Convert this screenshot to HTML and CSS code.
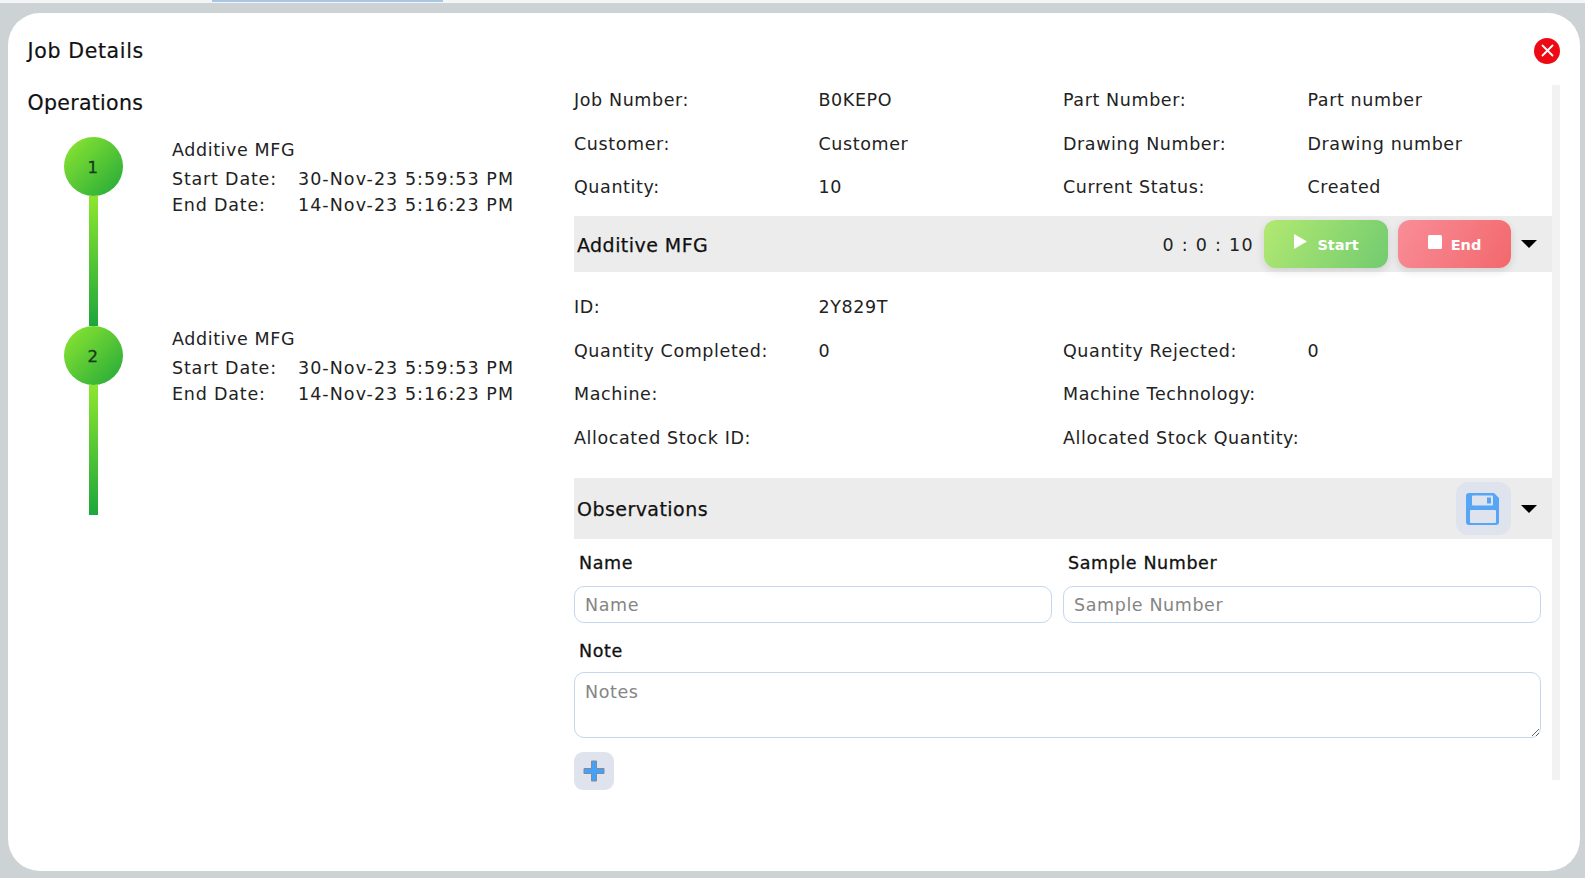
FILE: index.html
```html
<!DOCTYPE html>
<html lang="en">
<head>
  <meta charset="UTF-8" />
  <title>Job Details</title>
  <link rel="stylesheet" href="styles.css">
</head>
<body>
  <div class="top-strip"><span class="top-tab"></span></div>
  <div class="panel">
    <div class="panel-head">
      <h1>Job Details</h1>
      <button class="close-btn">
        <svg width="13" height="13" viewBox="0 0 13 13"><path d="M1.5 1.5l10 10M11.5 1.5l-10 10" stroke="#fff" stroke-width="1.8" stroke-linecap="round"/></svg>
      </button>
    </div>
    <div class="panel-body">
      <div class="ops">
        <h2>Operations</h2>
        <div class="step">
          <div class="step-mark"><div class="circle">1</div><div class="line"></div></div>
          <div class="step-text">
            <div class="step-title">Additive MFG</div>
            <div class="date-row"><span class="date-label">Start Date:</span><span class="date-value">30-Nov-23 5:59:53 PM</span></div>
            <div class="date-row"><span class="date-label">End Date:</span><span class="date-value">14-Nov-23 5:16:23 PM</span></div>
          </div>
        </div>
        <div class="step">
          <div class="step-mark"><div class="circle">2</div><div class="line"></div></div>
          <div class="step-text">
            <div class="step-title">Additive MFG</div>
            <div class="date-row"><span class="date-label">Start Date:</span><span class="date-value">30-Nov-23 5:59:53 PM</span></div>
            <div class="date-row"><span class="date-label">End Date:</span><span class="date-value">14-Nov-23 5:16:23 PM</span></div>
          </div>
        </div>
      </div>

      <div class="details">
        <div class="info-grid">
          <span>Job Number:</span><span>B0KEPO</span><span>Part Number:</span><span>Part number</span>
          <span>Customer:</span><span>Customer</span><span>Drawing Number:</span><span>Drawing number</span>
          <span>Quantity:</span><span>10</span><span>Current Status:</span><span>Created</span>
        </div>

        <div class="section-bar op-bar">
          <span class="section-title">Additive MFG</span>
          <span class="timer">0 : 0 : 10</span>
          <button class="act-btn start-btn">
            <svg width="15" height="17" viewBox="0 0 15 17"><path d="M1 1l13 7.500-13 7.500z" fill="#fff"/></svg>Start
          </button>
          <button class="act-btn end-btn">
            <svg width="14" height="14" viewBox="0 0 14 14"><rect width="14" height="14" rx="1.5" fill="#fff"/></svg>End
          </button>
          <span class="caret"></span>
        </div>

        <div class="info-grid op-grid">
          <span>ID:</span><span>2Y829T</span><span></span><span></span>
          <span>Quantity Completed:</span><span>0</span><span>Quantity Rejected:</span><span>0</span>
          <span>Machine:</span><span></span><span>Machine Technology:</span><span></span>
          <span>Allocated Stock ID:</span><span></span><span>Allocated Stock Quantity:</span><span></span>
        </div>

        <div class="section-bar obs-bar">
          <span class="section-title">Observations</span>
          <button class="save-btn">
            <svg width="34" height="34" viewBox="0 0 34 34">
              <path d="M3 1h25l5 5v24a3 3 0 0 1-3 3H3a3 3 0 0 1-3-3V4a3 3 0 0 1 3-3z" fill="#57a6f5"/>
              <rect x="6" y="3.500" width="21" height="10" rx="1" fill="#dfe3ee"/>
              <rect x="21" y="5.500" width="4" height="6" fill="#57a6f5"/>
              <rect x="4" y="18" width="26" height="13" rx="1" fill="#dfe3ee"/>
            </svg>
          </button>
          <span class="caret"></span>
        </div>

        <div class="form-row">
          <div class="field">
            <label>Name</label>
            <input type="text" placeholder="Name">
          </div>
          <div class="field">
            <label>Sample Number</label>
            <input type="text" placeholder="Sample Number">
          </div>
        </div>
        <div class="field note-field">
          <label>Note</label>
          <textarea placeholder="Notes"></textarea>
        </div>
        <button class="add-btn">
          <svg width="22" height="22" viewBox="0 0 22 22"><path d="M8.500 1h5v7.500H21v5h-7.500V21h-5v-7.500H1v-5h7.500z" fill="#45a0f7" stroke="#7f8b9c" stroke-width="1"/></svg>
        </button>
      </div>
      <div class="track"></div>
    </div>
  </div>
</body>
</html>
```

FILE: styles.css
```css
* {
  box-sizing: border-box;
}
html, body {
  height: 100%;
}
body {
  margin: 0;
  background: #cdd2d5;
  font-family: "DejaVu Sans", Verdana, sans-serif;
  font-size: 17.5px;
  letter-spacing: 0.6px;
  color: #222;
  overflow: hidden;
}
.top-strip {
  height: 3px;
  background: #f3f5f7;
  padding-left: 212px;
}
.top-tab {
  display: block;
  width: 231px;
  height: 2px;
  background: #a9c6e4;
}
.panel {
  width: 1572px;
  height: 858px;
  margin: 10px 0 0 8px;
  background: #fff;
  border-radius: 32px;
}
.panel-head {
  height: 72px;
  display: flex;
  align-items: center;
  justify-content: space-between;
  padding: 3px 20px 0 19.500px;
}
h1 {
  margin: 0;
  font-size: 20.500px;
  font-weight: 400;
  letter-spacing: 0.65px;
  color: #111;
  -webkit-text-stroke: 0.2px #111;
}
.close-btn {
  width: 26px;
  height: 26px;
  padding: 0;
  border: none;
  border-radius: 50%;
  background: #ee0a14;
  display: flex;
  align-items: center;
  justify-content: center;
}
.panel-body {
  display: flex;
}
.ops {
  width: 566px;
  flex: none;
}
h2 {
  margin: 0;
  height: 52px;
  padding: 0 0 0 19.500px;
  line-height: 36px;
  font-size: 20.500px;
  font-weight: 400;
  letter-spacing: 0.3px;
  color: #111;
  -webkit-text-stroke: 0.2px #111;
}
.step {
  display: flex;
  height: 189px;
}
.step-mark {
  width: 59px;
  margin: 0 49.500px 0 55.500px;
  display: flex;
  flex-direction: column;
  align-items: center;
}
.circle {
  width: 59px;
  height: 59px;
  flex: none;
  border-radius: 50%;
  background: linear-gradient(135deg, #90e830 0%, #21a83a 100%);
  text-align: center;
  line-height: 61px;
  font-size: 16.500px;
  -webkit-text-stroke: 0.3px #17381a;
  color: #17381a;
}
.line {
  width: 9px;
  flex: 1;
  background: linear-gradient(to bottom, #8ee62e 0%, #1ca63c 100%);
}
.step-text {
  line-height: 26px;
}
.step-title {
  margin-bottom: 3px;
}
.date-label {
  display: inline-block;
  width: 126px;
  letter-spacing: 0.8px;
}
.date-value {
  letter-spacing: 1.050px;
}
.details {
  width: 978px;
  flex: none;
}
.info-grid {
  display: grid;
  grid-template-columns: repeat(4, 244.500px);
  grid-auto-rows: 28px;
  row-gap: 15.500px;
  line-height: 30px;
}
.section-bar {
  display: flex;
  align-items: center;
  background: #ececec;
  padding: 0 15px 0 3px;
  margin-top: 16px;
}
.op-bar {
  height: 56px;
}
.op-grid {
  margin-top: 20px;
}
.obs-bar {
  height: 61px;
  margin-top: 27.500px;
}
.section-title {
  flex: 1;
  padding-top: 1px;
  font-size: 19px;
  font-weight: 400;
  letter-spacing: 0.45px;
  color: #111;
  -webkit-text-stroke: 0.25px #111;
}
.timer {
  margin-right: 10px;
  padding-top: 2px;
  letter-spacing: 1.300px;
}
.act-btn {
  height: 48px;
  padding-top: 2px;
  border: none;
  border-radius: 12px;
  color: #fff;
  font: 600 14.500px "DejaVu Sans", sans-serif;
  display: flex;
  align-items: center;
  justify-content: center;
  gap: 9px;
  box-shadow: 0 3px 8px rgba(0, 0, 0, 0.12);
}
.act-btn svg {
  margin-top: -6px;
}
.start-btn {
  width: 124px;
  background: linear-gradient(120deg, #b2e971 0%, #72cb70 100%);
}
.end-btn {
  width: 113px;
  margin-left: 10px;
  background: linear-gradient(120deg, #f98d98 0%, #f2686c 100%);
}
.caret {
  width: 0;
  height: 0;
  margin-left: 10px;
  border-left: 8px solid transparent;
  border-right: 8px solid transparent;
  border-top: 8px solid #000;
}
.save-btn {
  width: 55px;
  height: 53px;
  padding: 0 1px 0 0;
  border: none;
  border-radius: 12px;
  background: #dfe3ee;
  display: flex;
  align-items: center;
  justify-content: center;
}
.form-row {
  display: grid;
  grid-template-columns: 478px 478px;
  column-gap: 11px;
  margin-top: 10px;
}
.field label {
  display: block;
  padding-left: 5px;
  line-height: 29px;
  height: 28px;
  color: #111;
  -webkit-text-stroke: 0.3px #111;
}
.field input {
  display: block;
  width: 100%;
  height: 37px;
  margin-top: 9px;
  padding: 0 10px;
  border: 1.5px solid #c4d7ec;
  border-radius: 10px;
  font: inherit;
  letter-spacing: 0.6px;
}
input::placeholder, textarea::placeholder {
  color: #858585;
  opacity: 1;
}
.note-field {
  width: 967px;
  margin-top: 14px;
}
.note-field textarea {
  display: block;
  width: 100%;
  height: 66px;
  margin-top: 7px;
  padding: 9px 10px;
  border: 1.5px solid #c4d7ec;
  border-radius: 10px;
  font: inherit;
  letter-spacing: 0.6px;
}
.add-btn {
  width: 40px;
  height: 38px;
  margin-top: 14px;
  padding: 0 1px 0 0;
  border: none;
  border-radius: 9px;
  background: #dfe3ee;
  display: flex;
  align-items: center;
  justify-content: center;
}
.track {
  width: 8px;
  height: 695px;
  flex: none;
  background: #f2f2f2;
}
```
